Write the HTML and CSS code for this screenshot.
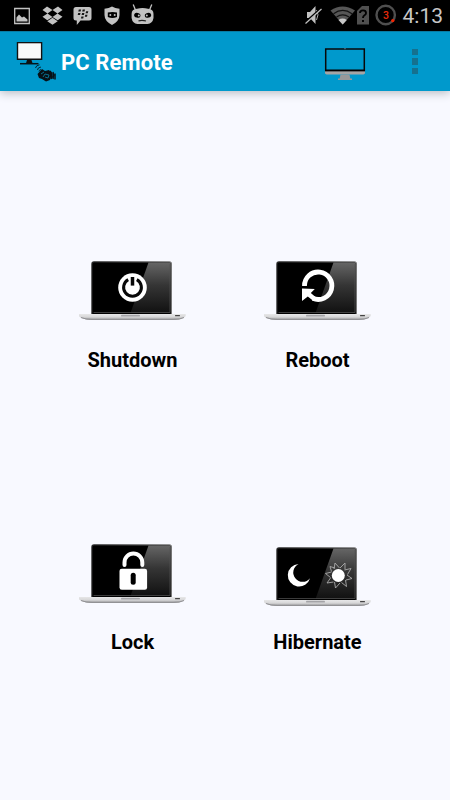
FILE: index.html
```
<!DOCTYPE html>
<html lang="en">
<head>
<meta charset="utf-8">
<title>PC Remote</title>
<link rel="stylesheet" href="styles.css">
</head>
<body>
<svg class="defs" aria-hidden="true">
  <defs>
    <linearGradient id="glare" x1="0" y1="0" x2="0" y2="1"><stop offset="0" stop-color="#666"/><stop offset=".45" stop-color="#353535"/><stop offset="1" stop-color="#111"/></linearGradient>
    <linearGradient id="base" x1="0" y1="0" x2="0" y2="1"><stop offset="0" stop-color="#e7e7e8"/><stop offset=".55" stop-color="#d6d6d7"/><stop offset="1" stop-color="#8f8f92"/></linearGradient>
    <linearGradient id="rim" x1="0" y1="0" x2="1" y2="0"><stop offset="0" stop-color="#282828"/><stop offset="1" stop-color="#777"/></linearGradient>
    <symbol id="laptop" viewBox="0 0 108 60">
      <path d="M12.300 54V4Q12.300 1.200 15 1.200H90.300Q93 1.200 93 4V54Z" fill="url(#rim)"/>
      <path d="M13.500 54V4Q13.500 2.400 15 2.400H90.300Q91.800 2.400 91.800 4V54Z" fill="#000"/>
      <path d="M69.500 2.400H90.300Q91.800 2.400 91.800 4V53H51.500Z" fill="url(#glare)"/>
      <path d="M91 4V52.500H14.500" fill="none" stroke="#555" stroke-width=".7"/>
      <path d="M-.3 54H106.700V56Q104 59.700 96 59.700H11Q3 59.700 -.3 56Z" fill="url(#base)"/>
      <path d="M2 57.500Q7 59.500 13 59.500H94Q101 59.500 105 57.500" fill="none" stroke="#929295"/>
      <rect x="42" y="54.800" width="19" height="1.800" rx=".9" fill="#a4a4a7"/>
      <rect x="96" y="55" width="5" height="1.300" rx=".5" fill="#444"/>
    </symbol>
  </defs>
</svg>
<header class="status">
  <svg class="notices" width="160" height="31" viewBox="0 0 160 31" fill="#c2c2c2">
    <path d="M14.700 8.500h14.600v15H14.700z" fill="none" stroke="#c2c2c2" stroke-width="1.300"/><path d="M16.500 21.500v-4l2.500-3 3 3 2-1 3.500 3v2z"/>
    <path d="M47 6.500l5.500 3.600-5 3.400-5-3.600zM58 6.500l4.500 3.400-5 3.600-5-3.400zM42.500 16.700l5-3.200 5 3.500-5.200 3.300zM57.500 13.500l5 3.200-4.800 3.600-5.200-3.300zM47.300 21.200l5.200-3.400 5.200 3.400-5.200 3.500z"/>
    <path d="M76 7h13q2.500 0 2.500 2.500V18q0 2.500-2.500 2.500h-8.500L76.800 25v-4.500H76q-2.500 0-2.500-2.500V9.500Q73.500 7 76 7z"/>
    <path fill="#151515" d="M78.800 9.400h2.300l-.5 2h-2.300zm3.900 0h2.300l-.5 2h-2.300zm-4.500 3.600h2.300l-.5 2h-2.300zm3.900 0h2.300l-.5 2h-2.300zm4-1.800h2.200l-.5 2h-2.200zm-.8 3.600h2.200l-.5 2h-2.200zm-3.900 1.700h2.300l-.5 2h-2.300z"/>
    <path d="M112 6.500q3 2 7.500 2.300V15q0 6-7.500 10-7.500-4-7.500-10V8.800q4.500-.3 7.500-2.300z"/><path d="M107.800 12.500q4.700-1.200 9.200 0v4.500q-4.600 1.800-9.200 0z" fill="#000"/><circle cx="110.300" cy="15" r="1"/><circle cx="114.700" cy="15" r="1"/>
    <path d="M133.200 4.500l2.300 5.500M151.800 4.500l-2.300 5.500" stroke="#c2c2c2" stroke-width="1.300"/><path d="M137 8.700q5.500-1.200 11 0Q153.500 9 153.500 14v4q-1 5.700-6 6h-10q-5-.3-5.900-6v-4Q131.600 9 137 8.700z"/><ellipse cx="137.300" cy="15.300" rx="3.200" ry="2.400" transform="rotate(15 137.300 15.300)" fill="#000"/><ellipse cx="148" cy="15.300" rx="3.200" ry="2.400" transform="rotate(-15 148 15.300)" fill="#000"/><circle cx="138.800" cy="15.500" r="1"/><circle cx="146.800" cy="15.500" r="1"/><path d="M138.500 20.800q4-.8 7.500.2" fill="none" stroke="#222" stroke-width="1.200"/>
  </svg>
  <div class="system">
    <svg width="98" height="31" viewBox="303 0 98 31">
      <path d="M307 12h3l5.500-6v18l-5.500-6h-3z" fill="#c2c2c2"/><path d="M316.500 10q3 4.500 0 10" fill="none" stroke="#aaa"/><path d="M305 22.500L321 8.500" stroke="#000" stroke-width="2"/><path d="M305.500 23.500L321.500 9" stroke="#c2c2c2" stroke-width="1.200"/>
      <path d="M330.500 10.500q12-8 24.500 0L342.700 24.500z" fill="#565656"/><path d="M333.500 13.700q9.200-6.500 18.500 0M336.500 17q6.200-4.200 12.500 0" fill="none" stroke="#111" stroke-width="1.200"/><path d="M338.500 20q4-2.800 8.300 0l-4.100 4.500z" fill="#c8c8c8"/>
      <path d="M362 6h7v18.500h-12V11z" fill="#505050"/><path d="M360 13q0-2.600 3-2.600t3 2.500q0 1.500-1.500 2.400T363 18M363 20v2" fill="none" stroke="#000" stroke-width="1.900"/>
      <circle cx="385.700" cy="15" r="9.200" fill="none" stroke="#4f4f4f" stroke-width="2.400"/><circle cx="392.800" cy="20.600" r="1.700" fill="#f32300"/><text class="battery" x="382.900" y="19">3</text>
    </svg>
    <time>4:13</time>
  </div>
</header>
<nav class="bar">
  <svg class="logo" width="42" height="42" viewBox="15 40 42 42">
    <rect x="16.800" y="41" width="25.500" height="18" fill="#111"/><rect x="18.200" y="42.300" width="22.700" height="15.200" fill="#f9f9f9"/><path d="M27 59h4.500l1 3.200h-6.500z" fill="#111"/><path d="M20 62.700h18.500" stroke="#06151b" stroke-width="1.500"/>
    <path d="M35.500 67q.5-2.700 4-3.200M37.500 69q0-2.500 3.500-3M39 70.500q0-1.500 2-2" fill="none" stroke="#052936" stroke-width="1"/>
    <path d="M37.500 73l4.500-5 3 2 4-1 3 4-2 6-4 1.500-4-2.500-3-1z" fill="#071016"/><path d="M41 73l3-2M43 76l2-3 4 1-1 3-3-1" fill="none" stroke="#087798" stroke-width=".9"/><path d="M50 70q3 3 1 8M53 71q1 3 0 7M55 72.500v6" fill="none" stroke="#071016" stroke-width="1.500"/>
  </svg>
  <h1>PC Remote</h1>
  <svg class="monitor" width="42" height="34" viewBox="324 47 42 34"><path d="M325 71h40v2.500l-1.500 1h-37L325 73.500z" fill="#a5a5a5"/><path d="M340.500 74.500h9l.8 4h1.700v1.500h-14v-1.500h1.700z" fill="#999"/><rect x="325.700" y="49" width="38.600" height="21.400" fill="#0099cc" stroke="#080808" stroke-width="1.500"/><path d="M325 70.500h40" stroke="#000" stroke-width="1.300"/><path d="M344 48.700h2" stroke="#567"/></svg>
  <div class="overflow"><i></i><i></i><i></i></div>
</nav>
<main>
  <button class="item">
    <svg width="108" height="60" viewBox="0 0 108 60"><use href="#laptop"/><circle cx="53.500" cy="27.500" r="14.300" fill="#fff"/><path d="M49.200 19.600a8.900 8.900 0 1 0 8.600 0" fill="none" stroke="#080808" stroke-width="3"/><path d="M53.500 17v8.600" stroke="#080808" stroke-width="3.500"/></svg>
    <span>Shutdown</span>
  </button>
  <button class="item">
    <svg width="108" height="60" viewBox="0 0 108 60"><use href="#laptop"/><path d="M40.500 26a13.700 13.700 0 1 1 8.300 12.300" fill="none" stroke="#fff" stroke-width="4.800"/><path d="M38 28.500l12.800.5-4 4 5 4.200-3 3.400-5-4-5.800 4.500z" fill="#fff"/></svg>
    <span>Reboot</span>
  </button>
  <button class="item lower">
    <svg width="108" height="60" viewBox="0 0 108 60"><use href="#laptop"/><path d="M45.500 22v-2.500a8.900 8.900 0 0 1 17.800 0V22" fill="none" stroke="#fff" stroke-width="4" stroke-linecap="round"/><rect x="40.500" y="25.700" width="27.600" height="21" rx="2.300" fill="#fff"/><rect x="51.700" y="29.700" width="5" height="12" rx="2.500" fill="#000"/></svg>
    <span>Lock</span>
  </button>
  <button class="item lower hibernate">
    <svg width="108" height="60" viewBox="0 0 108 60"><use href="#laptop"/><path d="M34.500 18a11.300 11.300 0 1 0 11.500 14.300A9.400 9.400 0 1 1 34.500 18z" fill="#fff"/><g fill="none" stroke="#aaa" stroke-width=".9" stroke-linejoin="round"><path d="M70 23l1-6 4.500 5M76 22l5-5v6.500M80.500 24l6.500-1.500-3.500 6M83 29l5 3.500-6 1.500M81.500 34l1 6.500-5-4M76 37l-4.500 5-1-6M69.500 36l-6.500 1 3.500-5M66.500 31.500l-5-4 6-1.500M67.500 25.500l-1.500-5 5 1.500"/></g><circle cx="74.300" cy="29.500" r="6.500" fill="#fff"/></svg>
    <span>Hibernate</span>
  </button>
</main>
</body>
</html>
```

FILE: styles.css
```
* { box-sizing: border-box; }
body { margin: 0; width: 450px; height: 800px; overflow: hidden; display: flex; flex-direction: column; background: #f8f9ff; font-family: Roboto, sans-serif; }
svg { display: block; flex: none; }
.defs { position: absolute; width: 0; height: 0; }
.status { position: relative; z-index: 1; height: 31px; flex: none; display: flex; justify-content: space-between; background: #000; }
.system { display: flex; padding-right: 7px; }
time { width: 42px; font-size: 21px; line-height: 33px; color: #c8c8c8; text-align: right; white-space: nowrap; }
.battery { font: 500 10.5px Roboto, sans-serif; fill: #e32b0c; }
.bar { height: 60px; flex: none; display: flex; align-items: flex-start; padding: 9px 32px 0 15px; background: #0099cc; border-top: 1px solid #087ca4; box-shadow: 0 2px 9px #b7bac1; }
h1 { margin: 7px 0 0 4px; color: #fff; font-size: 22px; line-height: 30px; font-weight: 700; letter-spacing: .1px; white-space: nowrap; }
.monitor { margin: 6px 46px 0 auto; }
.overflow { width: 6px; margin-top: 8px; display: grid; gap: 3px; }
.overflow i { height: 6.300px; background: #15718f; }
main { height: 709px; display: grid; grid-template-columns: 185px 185px; grid-template-rows: 283px 284px; padding: 169px 0 0 40px; }
.item { display: flex; flex-direction: column; align-items: center; align-self: start; padding: 0; border: 0; background: transparent; color: #000; font-family: inherit; }
.item span { margin-top: 28px; font-size: 20px; line-height: 24px; font-weight: 700; }
.lower span { margin-top: 27px; }
.hibernate { padding-top: 3px; }
.hibernate span { margin-top: 24px; }
```
